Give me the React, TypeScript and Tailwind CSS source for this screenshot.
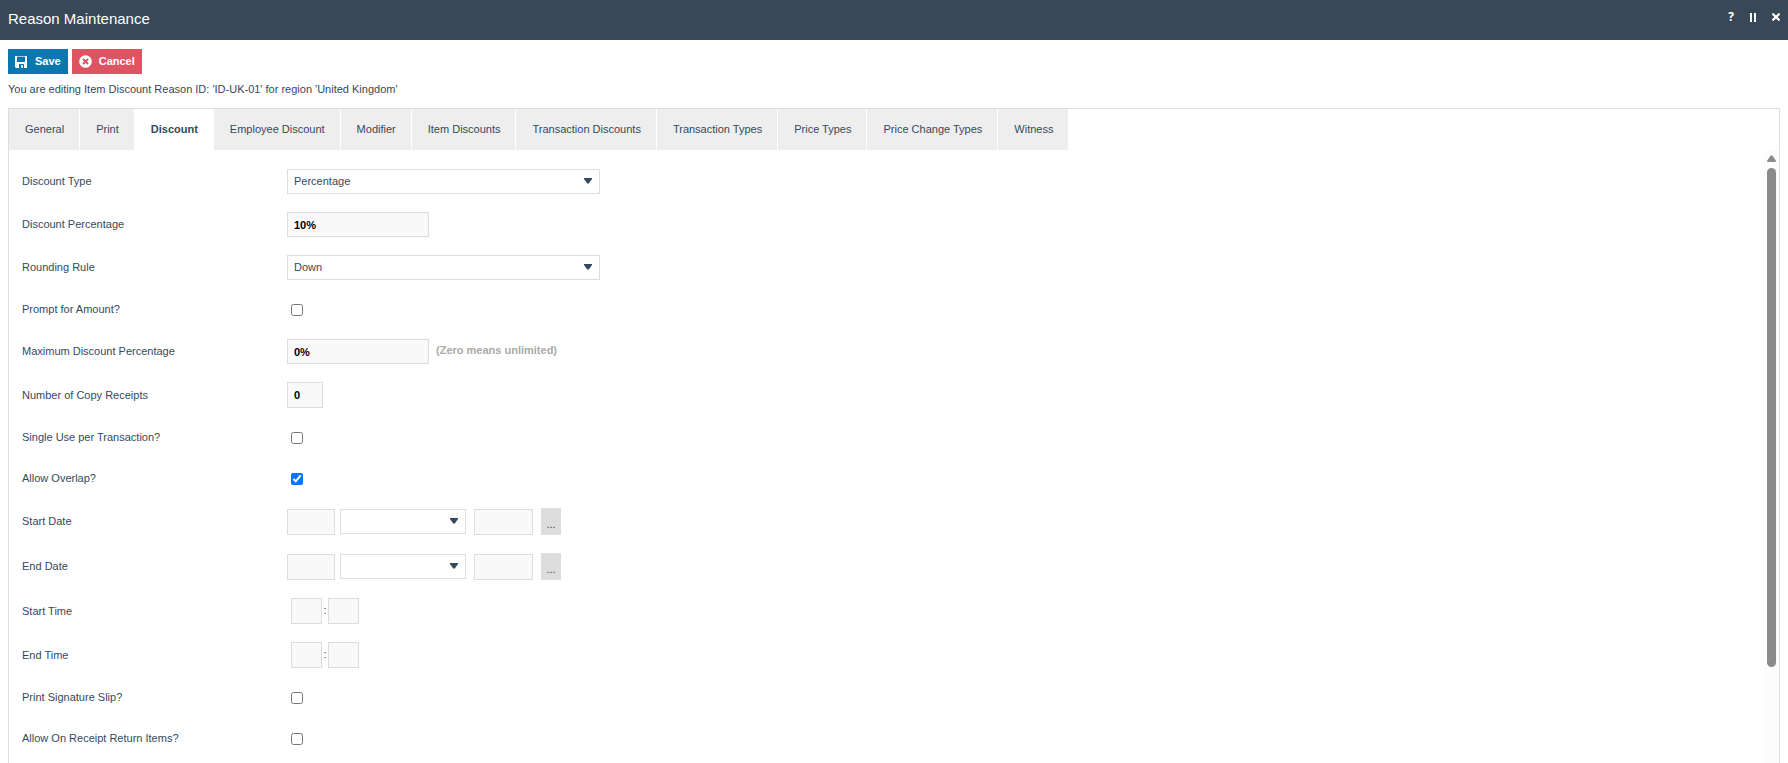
import { useState, type ReactNode } from 'react';

const tabs = [
    'General',
    'Print',
    'Discount',
    'Employee Discount',
    'Modifier',
    'Item Discounts',
    'Transaction Discounts',
    'Transaction Types',
    'Price Types',
    'Price Change Types',
    'Witness',
];

const months = ['', 'January', 'February', 'March', 'April', 'May', 'June', 'July', 'August', 'September', 'October', 'November', 'December'];

export default function App() {
    const [active, setActive] = useState('Discount');

    return (
        <div className="flex h-screen flex-col overflow-hidden bg-white font-['Liberation_Sans',Arial,sans-serif] text-[11px] text-[#34495e]">
            <header className="flex h-10 shrink-0 items-center justify-between bg-[#394857] px-2 pb-0.5 text-white">
                <h1 className="text-[15px] leading-5">Reason Maintenance</h1>
                <HeaderActions />
            </header>

            <main className="flex min-h-0 flex-1 flex-col px-2 pt-[9px]">
                <div className="flex gap-1 font-bold text-white">
                    <button type="button" className="flex h-[25px] items-center gap-2 bg-[#0a77ae] pr-[7px] pl-[7px]">
                        <SaveIcon />
                        Save
                    </button>
                    <button type="button" className="flex h-[25px] items-center gap-[7px] bg-[#df5462] pr-[7px] pl-[7px]">
                        <CancelIcon />
                        Cancel
                    </button>
                </div>

                <p className="pt-1.5 pb-2.5 leading-[18px]">You are editing Item Discount Reason ID: 'ID-UK-01' for region 'United Kingdom'</p>

                <section className="flex min-h-0 flex-1 flex-col border border-b-0 border-[#ddd]">
                    <nav className="flex shrink-0 gap-px">
                        {tabs.map((tab) => (
                            <button
                                key={tab}
                                type="button"
                                onClick={() => setActive(tab)}
                                className={tab === active ? 'h-[41px] bg-white pr-[15px] pl-4 font-bold' : 'h-[41px] bg-[#eee] pr-[15px] pl-4'}
                            >
                                {tab}
                            </button>
                        ))}
                    </nav>
                    <div className="flex min-h-0 flex-1">
                        <DiscountForm />
                        <ScrollTrack />
                    </div>
                </section>
            </main>
        </div>
    );
}

function DiscountForm() {
    return (
        <form className="min-w-0 flex-1 overflow-hidden pt-2.5 pl-[13px]">
            <Row label="Discount Type" id="discount-type">
                <Select id="discount-type" options={['Percentage', 'Amount']} width="w-[313px]" />
            </Row>
            <Row label="Discount Percentage" id="discount-percentage">
                <TextBox id="discount-percentage" value="10%" size="h-[25px] w-[142px]" />
            </Row>
            <Row label="Rounding Rule" id="rounding-rule">
                <Select id="rounding-rule" options={['Down', 'Up']} width="w-[313px]" />
            </Row>
            <CheckRow label="Prompt for Amount?" id="prompt-amount" />
            <Row label="Maximum Discount Percentage" id="max-percentage">
                <TextBox id="max-percentage" value="0%" size="h-[25px] w-[142px]" />
                <span className="ml-[7px] pb-0.5 font-bold text-[#aaa]">(Zero means unlimited)</span>
            </Row>
            <Row label="Number of Copy Receipts" id="copy-receipts">
                <TextBox id="copy-receipts" value="0" size="h-[26px] w-9" />
            </Row>
            <CheckRow label="Single Use per Transaction?" id="single-use" />
            <CheckRow label="Allow Overlap?" id="allow-overlap" checked />
            <DateRow label="Start Date" id="start-date" />
            <DateRow label="End Date" id="end-date" />
            <TimeRow label="Start Time" id="start-time" />
            <TimeRow label="End Time" id="end-time" />
            <CheckRow label="Print Signature Slip?" id="print-slip" />
            <CheckRow label="Allow On Receipt Return Items?" id="allow-return" />
        </form>
    );
}

function Row({ label, id, children }: { label: string; id: string; children: ReactNode }) {
    return (
        <div className="flex items-center py-[9px]">
            <label htmlFor={id} className="w-[265px] shrink-0">
                {label}
            </label>
            {children}
        </div>
    );
}

function CheckRow({ label, id, checked }: { label: string; id: string; checked?: boolean }) {
    return (
        <div className="flex h-[41px] items-center">
            <label htmlFor={id} className="w-[265px] shrink-0">
                {label}
            </label>
            <input id={id} type="checkbox" defaultChecked={checked} className="ml-1 size-3" />
        </div>
    );
}

function DateRow({ label, id }: { label: string; id: string }) {
    return (
        <Row label={label} id={id}>
            <TextBox id={id} label={`${label} day`} size="h-[26px] w-12" />
            <div className="ml-[5px]">
                <Select label={`${label} month`} options={months} width="w-[126px]" />
            </div>
            <div className="ml-2">
                <TextBox label={`${label} year`} size="h-[26px] w-[59px]" />
            </div>
            <button type="button" className="ml-2 flex h-[27px] w-5 items-end justify-center bg-[#ddd] pb-[3px]">
                ...
            </button>
        </Row>
    );
}

function TimeRow({ label, id }: { label: string; id: string }) {
    return (
        <Row label={label} id={id}>
            <div className="ml-1 flex items-center">
                <TextBox id={id} label={`${label} hours`} size="h-[26px] w-[31px]" />
                <span className="w-1.5 pb-0.5 text-center">:</span>
                <TextBox label={`${label} minutes`} size="h-[26px] w-[31px]" />
            </div>
        </Row>
    );
}

function TextBox({ id, label, value, size }: { id?: string; label?: string; value?: string; size: string }) {
    return (
        <input
            id={id}
            type="text"
            aria-label={label}
            defaultValue={value}
            className={`block border border-[#ddd] bg-[#f9f9f9] px-1.5 font-bold text-black ${size}`}
        />
    );
}

function Select({ id, label, options, width }: { id?: string; label?: string; options: string[]; width: string }) {
    return (
        <div className={`relative ${width}`}>
            <select id={id} aria-label={label} className="block h-[25px] w-full appearance-none border border-[#ddd] bg-white px-1.5">
                {options.map((option) => (
                    <option key={option}>{option}</option>
                ))}
            </select>
            <svg viewBox="0 0 8 6" className="pointer-events-none absolute top-[9px] right-2 h-1.5 w-2" fill="#34495e">
                <path d="M0 0h8v1L4.8 5.6H3.2L0 1z" />
            </svg>
        </div>
    );
}

function ScrollTrack() {
    return (
        <div className="flex w-[15px] shrink-0 flex-col items-center bg-[#fcfcfc] pt-[5px]">
            <svg viewBox="0 0 9 7" className="h-[7px] w-[9px] shrink-0" fill="#8b8b8b">
                <path d="M3.7.6Q4.5-.3 5.3.6L8.8 5.6Q9.2 7 8 7H1Q-.2 7 .2 5.6z" />
            </svg>
            <div className="mt-1.5 h-[82%] w-[9px] shrink-0 rounded-full bg-[#8b8b8b]" />
        </div>
    );
}

function HeaderActions() {
    return (
        <div className="flex items-center gap-4 pb-1">
            <button type="button" aria-label="Help" className="w-1.5 font-['Open_Sans',sans-serif] text-xs leading-3 font-bold">
                ?
            </button>
            <button type="button" aria-label="Pause">
                <svg viewBox="0 0 6 9" className="h-[9px] w-1.5" fill="currentColor">
                    <path d="M0 0h2v9H0zM4 0h2v9H4z" />
                </svg>
            </button>
            <button type="button" aria-label="Close">
                <svg viewBox="0 0 8 8" className="size-2" stroke="currentColor" strokeWidth="2.2">
                    <path d="M.4.6l7.2 6.8M7.6.6L.4 7.4" />
                </svg>
            </button>
        </div>
    );
}

function SaveIcon() {
    return (
        <svg viewBox="0 0 12 12" className="size-3">
            <path fill="#fff" fillRule="evenodd" d="M0 0h2v6h8V0h2v12H1L0 11zM4 8v4h5V8z" />
            <path fill="#fff" fillOpacity=".6" d="M2 0h8v1H2z" />
            <path fill="#fff" fillOpacity=".8" d="M6 9h2v3H6z" />
        </svg>
    );
}

function CancelIcon() {
    return (
        <svg viewBox="0 0 13 13" className="size-[13px]">
            <circle cx="6.5" cy="6.5" r="6.3" fill="#fff" />
            <path d="M4 4l5 5M9 4L4 9" stroke="#df5462" strokeWidth="2" />
        </svg>
    );
}
